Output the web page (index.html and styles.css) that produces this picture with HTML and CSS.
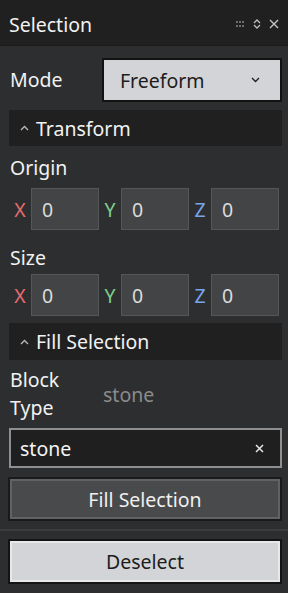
FILE: index.html
```html
<!DOCTYPE html>
<html>

<head>
    <link rel="stylesheet" href="styles.css">
</head>

<body>
    <div class='window'>
        <div class='titlebar'>
            <span class='title'>Selection</span>
            <div class='title-icons'>
                <svg width='9' height='6' viewBox='0 0 9 6'>
                    <g fill='#6d6d6d'>
                        <rect x='0' y='0' width='2' height='2' /><rect x='3' y='0' width='2' height='2' /><rect x='6' y='0' width='2' height='2' />
                        <rect x='0' y='4' width='2' height='2' /><rect x='3' y='4' width='2' height='2' /><rect x='6' y='4' width='2' height='2' />
                    </g>
                </svg>
                <svg width='8' height='10' viewBox='0 0 8 10'>
                    <path d='M1 4 L4 1 L7 4 M1 6 L4 9 L7 6' stroke='#bdbdbd' stroke-width='1.3' fill='none' />
                </svg>
                <svg width='10' height='10' viewBox='0 0 10 10'>
                    <path d='M1 1 L9 9 M9 1 L1 9' stroke='#c4c4c4' stroke-width='1.4' fill='none' />
                </svg>
            </div>
        </div>

        <div class='panel'>
            <div class='row mode-row'>
                <span class='label'>Mode</span>
                <div class='dropdown'>
                    <span>Freeform</span>
                    <svg width='9' height='6' viewBox='0 0 9 6'>
                        <path d='M1 1 L4.5 4.5 L8 1' stroke='#222' stroke-width='1.4' fill='none' />
                    </svg>
                </div>
            </div>

            <div class='section-header'>
                <svg width='9' height='6' viewBox='0 0 9 6'>
                    <path d='M1 5 L4.5 1.5 L8 5' stroke='#bbb' stroke-width='1.3' fill='none' />
                </svg>
                <span>Transform</span>
            </div>

            <div class='label block-label origin-label'>Origin</div>
            <div class='vec-row'>
                <span class='axis axis-x'>X</span><div class='num-input'>0</div>
                <span class='axis axis-y'>Y</span><div class='num-input'>0</div>
                <span class='axis axis-z'>Z</span><div class='num-input'>0</div>
            </div>

            <div class='label block-label size-label'>Size</div>
            <div class='vec-row'>
                <span class='axis axis-x'>X</span><div class='num-input'>0</div>
                <span class='axis axis-y'>Y</span><div class='num-input'>0</div>
                <span class='axis axis-z'>Z</span><div class='num-input'>0</div>
            </div>

            <div class='section-header fill-header'>
                <svg width='9' height='6' viewBox='0 0 9 6'>
                    <path d='M1 5 L4.5 1.5 L8 5' stroke='#bbb' stroke-width='1.3' fill='none' />
                </svg>
                <span>Fill Selection</span>
            </div>

            <div class='row block-row'>
                <span class='label'>Block<br>Type</span>
                <span class='block-value'>stone</span>
            </div>

            <div class='text-input'>
                <span>stone</span>
                <svg width='9' height='9' viewBox='0 0 9 9'>
                    <path d='M1 1 L8 8 M8 1 L1 8' stroke='#e6e6e6' stroke-width='1.5' fill='none' />
                </svg>
            </div>

            <button class='button button-dark'>Fill Selection</button>
        </div>

        <div class='footer'>
            <button class='button button-light'>Deselect</button>
        </div>
    </div>
</body>

</html>
```
FILE: styles.css
```css
body {
    margin: 0;
    background: #2d2e30;
    font-family: "Noto Sans", "Open Sans", sans-serif;
    color: #f0f0f0;
}

.window {
    width: 288px;
    height: 593px;
    display: flex;
    flex-direction: column;
    background: #2d2e30;
}

.titlebar {
    height: 46px;
    background: #202020;
    display: flex;
    align-items: center;
    justify-content: space-between;
    padding: 3px 9px 0 9px;
    box-sizing: border-box;
    border-bottom: 1px solid #1a1a1a;
}

.title {
    font-size: 19.5px;
    color: #f2f2f2;
}

.title-icons {
    display: flex;
    align-items: center;
    gap: 8px;
}

.panel {
    padding: 12px 6px 0 9px;
    display: flex;
    flex-direction: column;
}

.row {
    display: flex;
    align-items: center;
}

.label {
    font-size: 19.5px;
    color: #f2f2f2;
    line-height: 28px;
}

.mode-row {
    justify-content: space-between;
    height: 44px;
    margin-left: 1px;
}

.dropdown {
    box-sizing: border-box;
    width: 180px;
    height: 44px;
    background: #d3d4d7;
    border: 2px solid #121212;
    display: flex;
    align-items: center;
    justify-content: space-between;
    padding: 0 20px 0 16px;
    color: #1c1c1c;
    font-size: 19.5px;
}

.section-header {
    margin-top: 8px;
    height: 36px;
    background: #202020;
    display: flex;
    align-items: center;
    gap: 7px;
    padding-left: 11px;
    font-size: 19.5px;
    color: #f2f2f2;
}

.fill-header {
    margin-top: 7px;
    height: 37px;
}

.block-label {
    margin-left: 1px;
    height: 30px;
    display: flex;
    align-items: center;
}

.origin-label {
    margin-top: 7px;
    margin-bottom: 5px;
}

.size-label {
    margin-top: 13px;
    margin-bottom: 1px;
}

.vec-row {
    display: flex;
    align-items: center;
    height: 42px;
}

.axis {
    width: 22px;
    text-align: center;
    font-size: 19.5px;
}

.axis-x { color: #e86b6b; }
.axis-y { color: #7dd08c; }
.axis-z { color: #78a4ec; }

.num-input {
    width: 68px;
    height: 42px;
    box-sizing: border-box;
    background: #434446;
    border: 1px solid #555658;
    padding-left: 10px;
    display: flex;
    align-items: center;
    font-size: 19.5px;
    color: #dcdcdc;
}

.block-row {
    margin: 6px 0 0 1px;
    height: 56px;
}

.block-row .label {
    width: 93px;
}

.block-value {
    color: #8b8b8b;
    font-size: 19.5px;
}

.text-input {
    margin-top: 6px;
    height: 40px;
    box-sizing: border-box;
    background: #1f1f1f;
    border: 2px solid #8f8f8f;
    display: flex;
    align-items: center;
    justify-content: space-between;
    padding: 0 16px 0 9px;
    font-size: 19.5px;
    color: #f4f4f4;
}

.button {
    font-family: inherit;
    font-size: 19.5px;
    height: 40px;
    width: 270px;
    box-sizing: border-box;
    cursor: pointer;
}

.button-dark {
    margin: 11px 0 0 1px;
    background: #494a4c;
    border: 2px solid #616264;
    outline: 2px solid #1a1a1a;
    color: #f0f0f0;
}

.footer {
    margin-top: 10px;
    border-top: 2px solid #3b3c3e;
    padding: 10px 0 0 10px;
}

.button-light {
    height: 41px;
    background: #d3d4d7;
    border: 2px solid #e8e8e8;
    outline: 2px solid #141414;
    color: #1c1c1c;
}
```
